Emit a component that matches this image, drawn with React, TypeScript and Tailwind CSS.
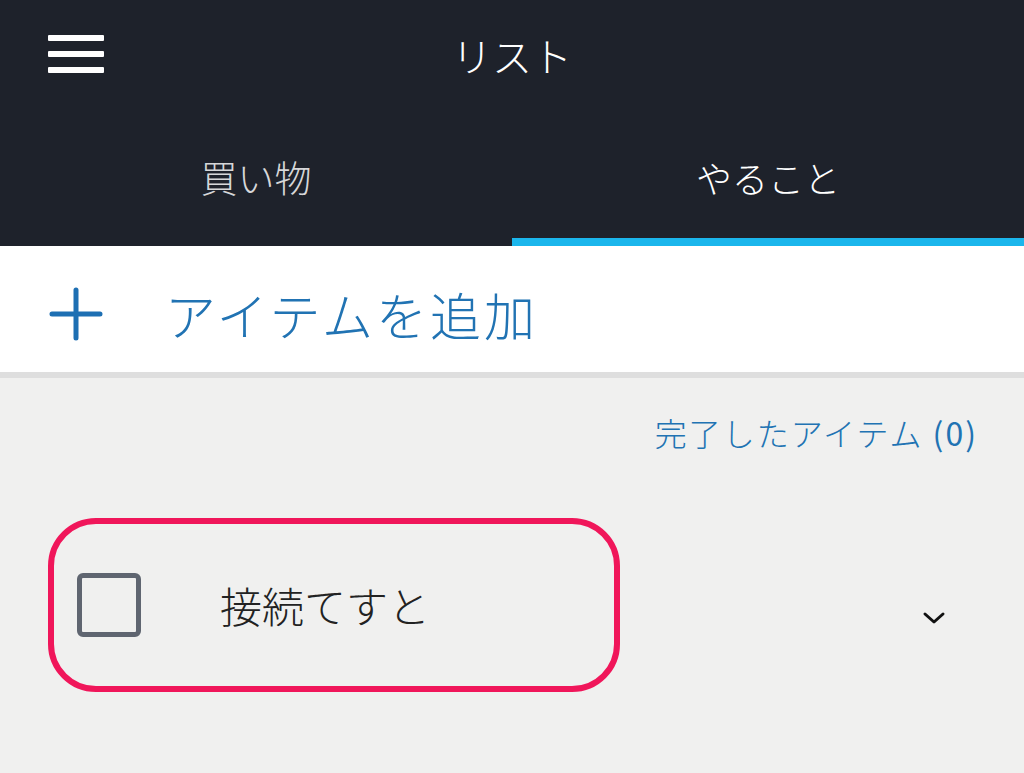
import React from 'react';

const font = { fontFamily: '"Noto Sans CJK JP", "Noto Sans", sans-serif' };

const App: React.FC = () => {
  return (
    <div className="w-[1024px] h-[773px] bg-[#f0f0ef] flex flex-col overflow-hidden font-light" style={font}>
      {/* Header */}
      <div className="bg-[#1e222b]">
        <div className="relative h-[110px] flex items-center justify-center">
          <div className="absolute left-[48px] top-[35px] w-[56px] flex flex-col gap-[10px]">
            <div className="h-[6px] bg-white rounded-[1px]" />
            <div className="h-[6px] bg-white rounded-[1px]" />
            <div className="h-[6px] bg-white rounded-[1px]" />
          </div>
          <span className="text-[40px] leading-none text-white">リスト</span>
        </div>
        <div className="h-[136px] flex">
          <div className="flex-1 flex flex-col">
            <div className="flex-1 flex items-center justify-center pt-[6px]">
              <span className="text-[37px] leading-none text-[#d6d7d9]">買い物</span>
            </div>
            <div className="h-[8px]" />
          </div>
          <div className="flex-1 flex flex-col">
            <div className="flex-1 flex items-center justify-center pt-[6px]">
              <span className="text-[36px] leading-none text-white">やること</span>
            </div>
            <div className="h-[8px] bg-[#1bb6ec]" />
          </div>
        </div>
      </div>

      {/* Add item */}
      <div className="h-[126px] bg-white flex items-center pt-[10px]">
        <svg className="ml-[48px] w-[56px] h-[56px]" viewBox="0 0 56 56">
          <path d="M28 4v48M4 28h48" stroke="#1d6fb3" strokeWidth="5" strokeLinecap="round" />
        </svg>
        <span className="ml-[61px] text-[51px] leading-none tracking-[3px] text-[#2173b3]">アイテムを追加</span>
      </div>
      <div className="h-[6px] bg-[#dedede]" />

      {/* Completed link */}
      <div className="flex justify-end pr-[46px] pt-[30px]">
        <span className="text-[32px] leading-[48px] tracking-[2px] text-[#2173b3]">
          完了したアイテム <span className="font-normal">(0)</span>
        </span>
      </div>

      {/* Item */}
      <div className="mt-[62px] flex items-center">
        <div className="ml-[48px] w-[572px] h-[174px] border-[6px] border-[#f0165a] rounded-[48px] flex items-center">
          <div className="ml-[23px] w-[64px] h-[64px] border-[5px] border-[#5f6570] rounded-[6px]" />
          <span className="ml-[79px] text-[42px] leading-none text-[#222222]">接続てすと</span>
        </div>
        <svg className="ml-[302px] mt-[26px] w-[24px] h-[14px]" viewBox="0 0 24 14">
          <path d="M3 3l9 8 9-8" stroke="#111" strokeWidth="3" fill="none" strokeLinecap="round" strokeLinejoin="round" />
        </svg>
      </div>
    </div>
  );
};

export default App;
